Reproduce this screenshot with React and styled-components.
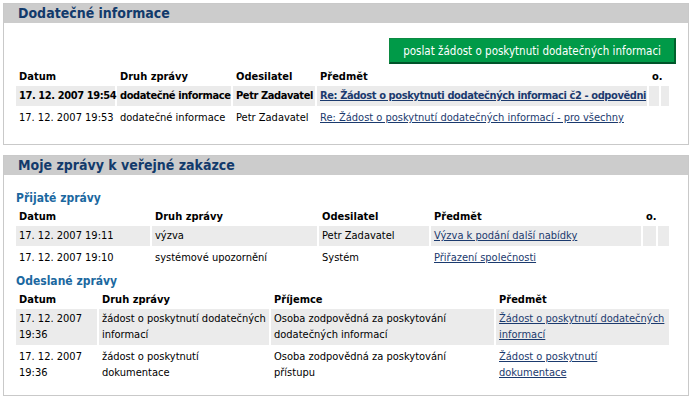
import React from 'react';
import styled, { createGlobalStyle } from 'styled-components';

const GlobalStyle = createGlobalStyle`
  * {
    box-sizing: border-box;
  }
  body {
    margin: 0;
    background: #fff;
    font-family: "DejaVu Sans Condensed", "DejaVu Sans", sans-serif;
    font-stretch: semi-condensed;
  }
`;

const additionalInfo = {
  cols: [99, 114, 82, 330, 10, 8],
  head: ['Datum', 'Druh zprávy', 'Odesilatel', 'Předmět', 'o.', ''],
  rows: [
    {
      unread: true,
      cells: ['17. 12. 2007 19:54', 'dodatečné informace', 'Petr Zadavatel'],
      subject: 'Re: Žádost o poskytnuti dodatečných informaci č2 - odpovědni',
      flags: true,
    },
    {
      cells: ['17. 12. 2007 19:53', 'dodatečné informace', 'Petr Zadavatel'],
      subject: 'Re: Žádost o poskytnutí dodatečných informací - pro všechny',
      flags: true,
    },
  ],
};

const received = {
  cols: [134, 165, 110, 210, 13, 11],
  head: ['Datum', 'Druh zprávy', 'Odesilatel', 'Předmět', 'o.', ''],
  rows: [
    {
      cells: ['17. 12. 2007 19:11', 'výzva', 'Petr Zadavatel'],
      subject: 'Výzva k podání další nabídky',
      flags: true,
    },
    {
      cells: ['17. 12. 2007 19:10', 'systémové upozornění', 'Systém'],
      subject: 'Přiřazení společnosti',
      flags: true,
    },
  ],
};

const sent = {
  cols: [81, 170, 223, 173],
  head: ['Datum', 'Druh zprávy', 'Příjemce', 'Předmět'],
  rows: [
    {
      cells: [
        ['17. 12. 2007', '19:36'],
        ['žádost o poskytnutí dodatečných', 'informací'],
        ['Osoba zodpovědná za poskytování', 'dodatečných informací'],
      ],
      subject: ['Žádost o poskytnutí dodatečných', 'informací'],
    },
    {
      cells: [
        ['17. 12. 2007', '19:36'],
        ['žádost o poskytnutí', 'dokumentace'],
        ['Osoba zodpovědná za poskytování', 'přístupu'],
      ],
      subject: ['Žádost o poskytnutí', 'dokumentace'],
    },
  ],
};

const Lines = ({ text }) => {
  if (!Array.isArray(text)) return text;
  return text.map((line, i) => (
    <React.Fragment key={i}>
      {i > 0 && <br />}
      {line}
    </React.Fragment>
  ));
};

const MessageTable = ({ data }) => (
  <Table>
    <colgroup>
      {data.cols.map((w, i) => (
        <Col key={i} $w={w} />
      ))}
    </colgroup>
    <thead>
      <tr>
        {data.head.map((h, i) => (
          <Th key={i}>{h}</Th>
        ))}
      </tr>
    </thead>
    <tbody>
      {data.rows.map((row, i) => (
        <Row key={i} $shaded={i % 2 === 0} $unread={row.unread}>
          {row.cells.map((c, j) => (
            <Td key={j}>
              <Lines text={c} />
            </Td>
          ))}
          <Td>
            <Link href="#">
              <Lines text={row.subject} />
            </Link>
          </Td>
          {row.flags && (
            <>
              <Td />
              <Td />
            </>
          )}
        </Row>
      ))}
    </tbody>
  </Table>
);

const App = () => (
  <Page>
    <GlobalStyle />
    <Panel $bottom={14}>
      <PanelTitle>Dodatečné informace</PanelTitle>
      <Actions>
        <GreenButton>poslat žádost o poskytnuti dodatečných informaci</GreenButton>
      </Actions>
      <MessageTable data={additionalInfo} />
    </Panel>

    <Panel $bottom={10}>
      <PanelTitle>Moje zprávy k veřejné zakázce</PanelTitle>
      <SectionTitle $top={16}>Přijaté zprávy</SectionTitle>
      <MessageTable data={received} />
      <SectionTitle $top={4}>Odeslané zprávy</SectionTitle>
      <MessageTable data={sent} />
    </Panel>
  </Page>
);

export default App;

const Page = styled.div`
  width: 693px;
  padding: 3px 4px 0 3px;
`;

const Panel = styled.section`
  border: 1px solid #c9c9c9;
  margin-bottom: 10px;
  padding-bottom: ${(p) => p.$bottom}px;
`;

const PanelTitle = styled.h2`
  margin: 0;
  height: 19px;
  padding-left: 14px;
  background: #cccccc;
  color: #123a6b;
  font-size: 14px;
  font-weight: bold;
  line-height: 19px;
`;

const Actions = styled.div`
  display: flex;
  justify-content: flex-end;
  padding: 15px 12px 1px 0;
`;

const GreenButton = styled.button`
  height: 26px;
  padding: 0 13px;
  background: #009a48;
  border: 1px solid #0c8a42;
  border-right: 2px solid #00622c;
  border-bottom: 2px solid #00542a;
  color: #fff;
  font-family: inherit;
  font-size: 11.5px;
  cursor: pointer;
`;

const SectionTitle = styled.h3`
  margin: ${(p) => p.$top}px 0 0 12px;
  color: #1b68a0;
  font-size: 12px;
  font-weight: bold;
  line-height: 14px;
`;

const Table = styled.table`
  width: 657px;
  margin-left: 10px;
  table-layout: fixed;
  border-collapse: separate;
  border-spacing: 2px;
  font-size: 11px;
  color: #000;
`;

const Col = styled.col`
  width: ${(p) => p.$w}px;
`;

const Th = styled.th`
  padding: 2px 3px 0;
  line-height: 15px;
  text-align: left;
  vertical-align: bottom;
  font-weight: bold;
  white-space: nowrap;
`;

const Row = styled.tr`
  background: ${(p) => (p.$shaded ? '#ebebeb' : '#fff')};
  font-weight: ${(p) => (p.$unread ? 'bold' : 'normal')};
  letter-spacing: ${(p) => (p.$unread ? '-0.4px' : 'normal')};
`;

const Td = styled.td`
  padding: 2px 3px;
  line-height: 16px;
  vertical-align: top;
  white-space: nowrap;
`;

const Link = styled.a`
  color: #1b3a6e;
  text-decoration: underline;
`;
